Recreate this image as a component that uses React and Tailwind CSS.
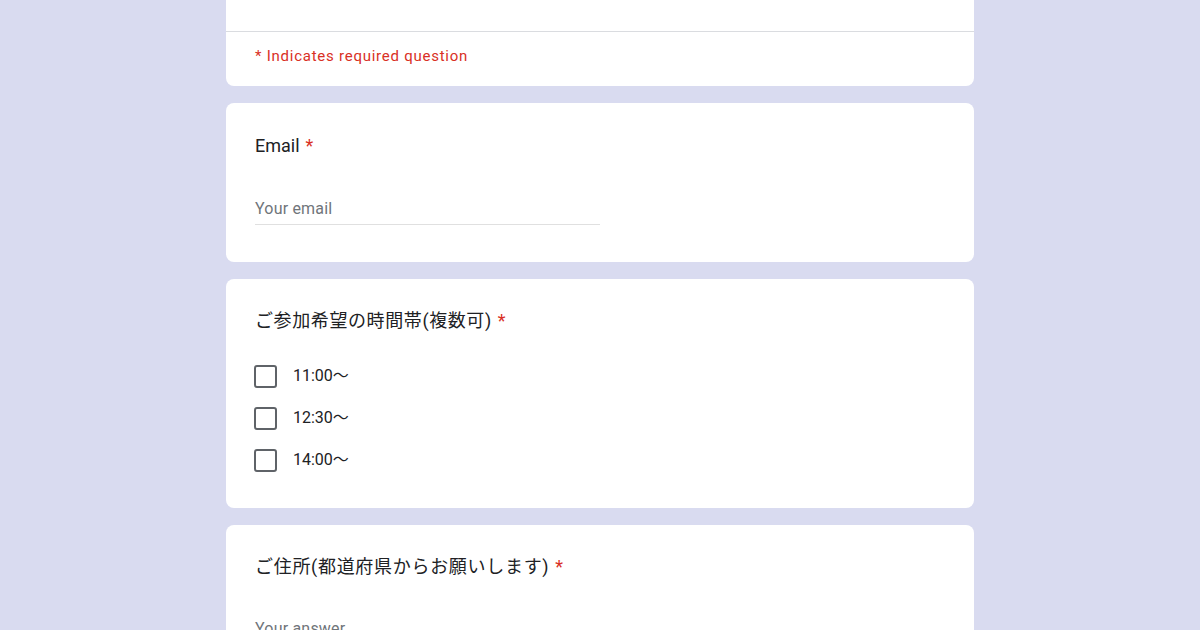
import React from "react";

const font = "font-['Roboto','Noto_Sans_CJK_JP',sans-serif]";

const Star = () => <span className="text-[#d93025] ml-[6px]">*</span>;

const Checkbox = ({ label }) => (
  <div className="flex items-center h-[42px]">
    <div className="w-[23px] h-[23px] border-2 border-[#5f6368] rounded-[3px]" />
    <span className="ml-[16px] text-[16px] text-[#202124]">{label}</span>
  </div>
);

export default function App() {
  return (
    <div className={`min-h-[630px] h-[630px] overflow-hidden bg-[#d9dbf0] ${font}`}>
      <div className="w-[748px] mx-auto flex flex-col gap-[17px]">
        <div className="bg-white rounded-b-lg">
          <div className="h-[32px] border-b border-[#dadce0]" />
          <div className="px-[29px] pt-[12px] pb-[18px] text-[15px] leading-[24px] text-[#d93025] tracking-[0.75px]">
            * Indicates required question
          </div>
        </div>

        <div className="bg-white rounded-lg px-[29px] pt-[31px] pb-[37px]">
          <div className="text-[18px] leading-[24px] text-[#202124]">
            Email<Star />
          </div>
          <div className="mt-[39px] w-[345px] border-b border-[#e0e0e0] pb-[3px] text-[16px] leading-[24px] text-[#70757a] tracking-[0.2px]">
            Your email
          </div>
        </div>

        <div className="bg-white rounded-lg px-[28px] pt-[30px] pb-[27px]">
          <div className="pl-[1px] text-[18px] leading-[24px] text-[#202124] tracking-[0.6px]">
            ご参加希望の時間帯(複数可)<Star />
          </div>
          <div className="mt-[22px] flex flex-col">
            <Checkbox label="11:00～" />
            <Checkbox label="12:30～" />
            <Checkbox label="14:00～" />
          </div>
        </div>

        <div className="bg-white rounded-lg px-[29px] pt-[30px] pb-[37px]">
          <div className="text-[18px] leading-[24px] text-[#202124] tracking-[0.7px]">
            ご住所(都道府県からお願いします)<Star />
          </div>
          <div className="mt-[38px] w-[345px] border-b border-[#e0e0e0] pb-[3px] text-[16px] leading-[24px] text-[#70757a] tracking-[0.2px]">
            Your answer
          </div>
        </div>
      </div>
    </div>
  );
}
